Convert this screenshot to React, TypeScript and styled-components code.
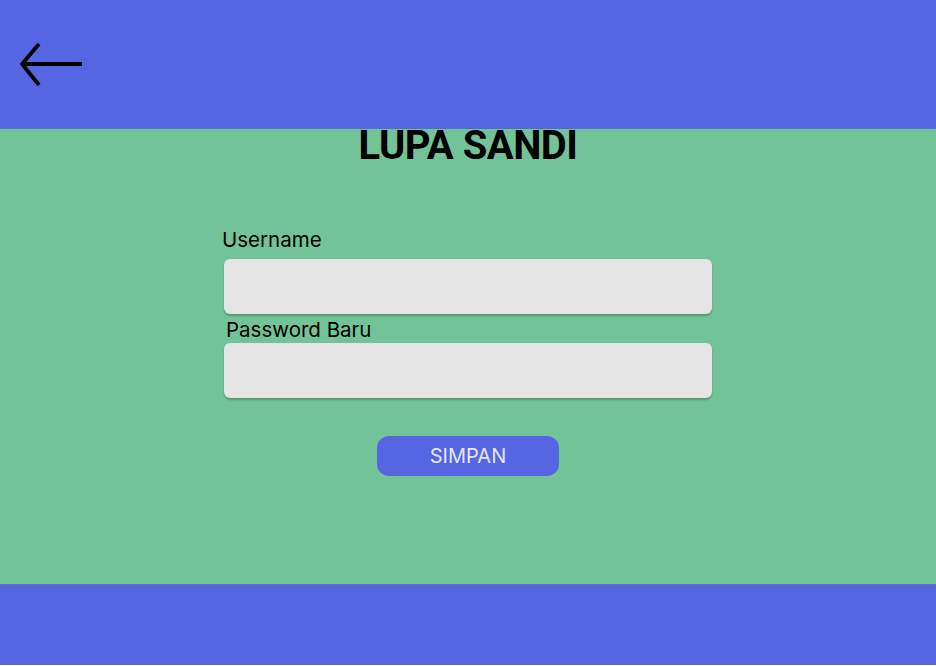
import styled, { createGlobalStyle } from "styled-components";

const GlobalStyle = createGlobalStyle`
  html, body {
    margin: 0;
    padding: 0;
    height: 100%;
  }
  body {
    font-family: "Inter", "Liberation Sans", sans-serif;
  }
  #root {
    height: 100%;
  }
`;

const App = () => {
  return (
    <>
      <GlobalStyle />
      <Page>
        <Header>
          <BackButton aria-label="Kembali">
            <svg width="64" height="48" viewBox="0 0 64 48" fill="none">
              <path
                d="M19 2 L2 22 L19 43 M2 22 L62 22"
                stroke="#000"
                strokeWidth="3.8"
                strokeLinecap="butt"
                strokeLinejoin="miter"
              />
            </svg>
          </BackButton>
        </Header>
        <Main>
          <Title>LUPA SANDI</Title>
          <Form>
            <Label>Username</Label>
            <Input type="text" />
            <Label $second>Password Baru</Label>
            <Input type="password" />
            <SaveButton>SIMPAN</SaveButton>
          </Form>
        </Main>
        <Footer />
      </Page>
    </>
  );
};

const Page = styled.div`
  height: 665px;
  display: flex;
  flex-direction: column;
`;

const Header = styled.header`
  height: 129px;
  background-color: #5665e1;
  display: flex;
  align-items: flex-start;
  padding: 42px 0 0 20px;
  box-sizing: border-box;
`;

const BackButton = styled.button`
  background: none;
  border: none;
  padding: 0;
  cursor: pointer;
  display: flex;
`;

const Main = styled.main`
  flex: 1;
  background-color: #72c498;
  display: flex;
  flex-direction: column;
  align-items: center;
`;

const Title = styled.h1`
  font-family: Roboto, "Noto Sans", sans-serif;
  font-weight: 700;
  font-size: 40px;
  line-height: 32px;
  letter-spacing: -0.5px;
  margin: 1px 0 0;
  color: #000;
`;

const Form = styled.div`
  width: 488px;
  display: flex;
  flex-direction: column;
  margin-top: 66px;
`;

const Label = styled.label<{ $second?: boolean }>`
  font-size: 20.5px;
  color: #000;
  line-height: 1.2;
  margin: ${(p) => (p.$second ? "3px 0 1px 2px" : "0 0 6px -2px")};
`;

const Input = styled.input`
  height: 55px;
  border: none;
  border-radius: 6px;
  background-color: #e4e4e4;
  box-shadow: 0 2px 2px rgba(0, 0, 0, 0.25);
  margin-bottom: 1px;
  padding: 0 12px;
  font-size: 18px;
  box-sizing: border-box;
  &:focus {
    outline: none;
  }
`;

const SaveButton = styled.button`
  align-self: center;
  width: 182px;
  height: 40px;
  margin-top: 37px;
  border: none;
  border-radius: 12px;
  background-color: #5665e1;
  color: #e6e6f6;
  font-family: "Inter", "Liberation Sans", sans-serif;
  font-size: 20px;
  cursor: pointer;
`;

const Footer = styled.footer`
  height: 81px;
  background-color: #5665e1;
  border-top: 1px solid #6071c0;
  box-sizing: border-box;
`;

export default App;
